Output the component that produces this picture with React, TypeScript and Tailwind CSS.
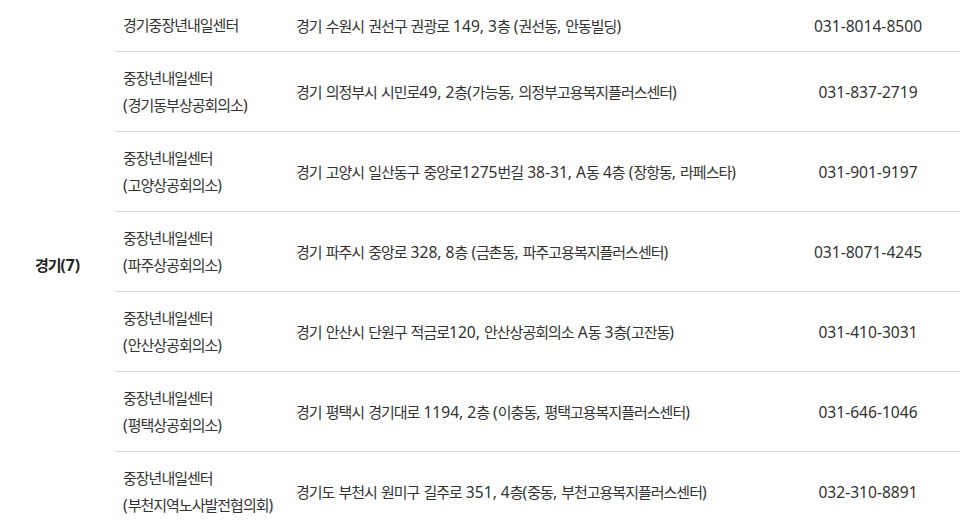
import React from "react";

type Row = { name: string[]; addr: string; tel: string };

const rows: Row[] = [
  { name: ["경기중장년내일센터"], addr: "경기 수원시 권선구 권광로 149, 3층 (권선동, 안동빌딩)", tel: "031-8014-8500" },
  { name: ["중장년내일센터", "(경기동부상공회의소)"], addr: "경기 의정부시 시민로49, 2층(가능동, 의정부고용복지플러스센터)", tel: "031-837-2719" },
  { name: ["중장년내일센터", "(고양상공회의소)"], addr: "경기 고양시 일산동구 중앙로1275번길 38-31, A동 4층 (장항동, 라페스타)", tel: "031-901-9197" },
  { name: ["중장년내일센터", "(파주상공회의소)"], addr: "경기 파주시 중앙로 328, 8층 (금촌동, 파주고용복지플러스센터)", tel: "031-8071-4245" },
  { name: ["중장년내일센터", "(안산상공회의소)"], addr: "경기 안산시 단원구 적금로120, 안산상공회의소 A동 3층(고잔동)", tel: "031-410-3031" },
  { name: ["중장년내일센터", "(평택상공회의소)"], addr: "경기 평택시 경기대로 1194, 2층 (이충동, 평택고용복지플러스센터)", tel: "031-646-1046" },
  { name: ["중장년내일센터", "(부천지역노사발전협의회)"], addr: "경기도 부천시 원미구 길주로 351, 4층(중동, 부천고용복지플러스센터)", tel: "032-310-8891" },
];

function K({ text }: { text: string }) {
  const parts = text.match(/[\uAC00-\uD7A3]+|[^\uAC00-\uD7A3]+/g) || [];
  return (
    <span className="whitespace-pre">
      {parts.map((p, i) =>
        /[\uAC00-\uD7A3]/.test(p) ? (
          <span key={i} className="tracking-[-1px]">{p}</span>
        ) : (
          <span key={i} className="text-[15.6px]">{p}</span>
        )
      )}
    </span>
  );
}

export default function App() {
  return (
    <div
      className="w-[970px] h-[529px] overflow-hidden bg-white text-[15px] text-[#333]"
      style={{ fontFamily: '"Noto Sans", "Noto Sans CJK KR", sans-serif' }}
    >
      <div className="grid w-[960px] grid-cols-[115px_173px_488px_184px]">
        <div className="row-span-7 flex items-center justify-center font-bold text-[#222]">
          <K text="경기(7)" />
        </div>
        {rows.map((r, i) => (
          <React.Fragment key={i}>
            <div
              className={`flex flex-col justify-center border-b border-[#dddddd] pl-2 leading-[27px] ${i === 0 ? "h-[52px]" : "h-[80px]"}`}
            >
              {r.name.map((n, j) => (
                <div key={j} className="whitespace-nowrap">
                  <K text={n} />
                </div>
              ))}
            </div>
            <div className={`flex items-center border-b border-[#dddddd] pl-2 leading-[28px] whitespace-nowrap ${i === 0 ? "h-[52px]" : "h-[80px]"}`}>
              <K text={r.addr} />
            </div>
            <div className={`flex items-center justify-center border-b border-[#dddddd] text-[15.6px] leading-[28px] ${i === 0 ? "h-[52px]" : "h-[80px]"}`}>
              {r.tel}
            </div>
          </React.Fragment>
        ))}
      </div>
    </div>
  );
}
